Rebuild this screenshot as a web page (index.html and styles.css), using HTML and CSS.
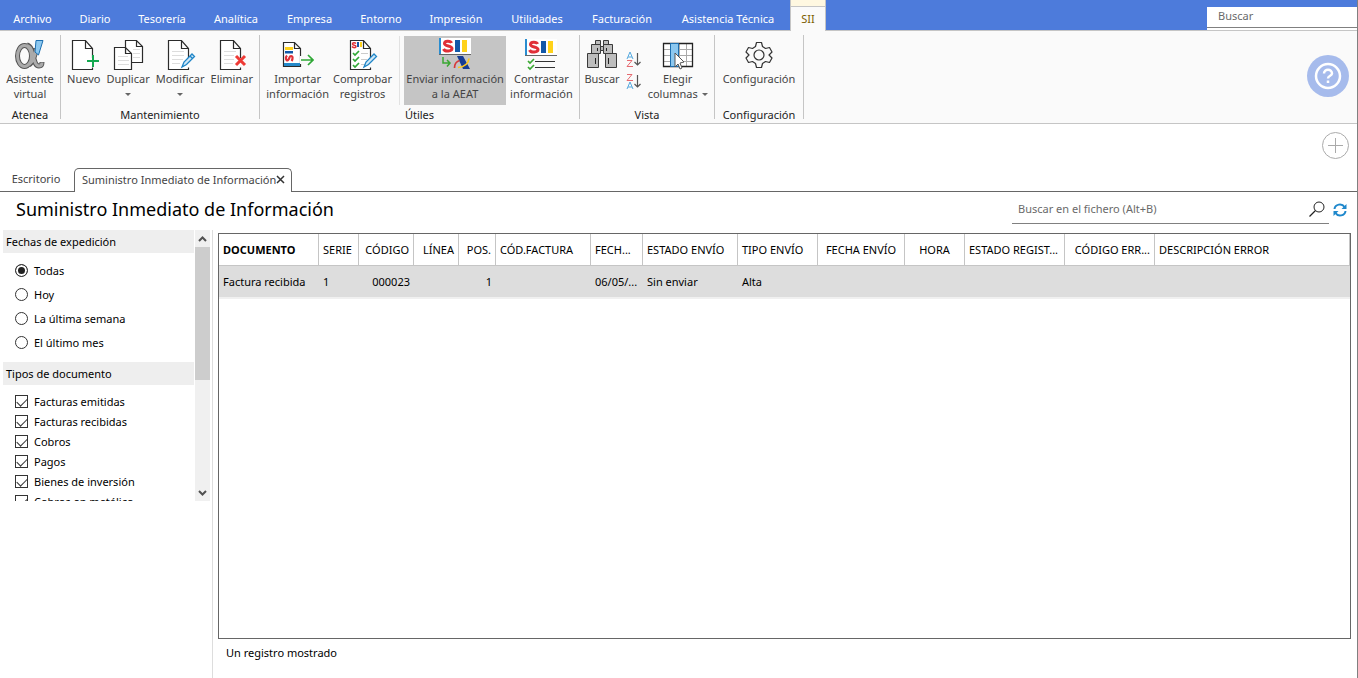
FILE: index.html
```html
<!DOCTYPE html>
<html lang="es">
<head>
<meta charset="utf-8">
<title>Suministro Inmediato de Información</title>
<link rel="stylesheet" href="styles.css">
</head>
<body>
<svg class="defs" aria-hidden="true">
  <symbol id="sii" viewBox="0 0 32 17">
    <path fill="#fff" d="M0 0h32v17H0z"/>
    <path fill="#2a8dd0" d="M0 0h2v17H0z"/>
    <path fill="#1258a8" d="M16 2h5v12h-5z"/>
    <path fill="#ffd21a" d="M23 2h5v12h-5z"/>
    <path fill="none" stroke="#e03038" stroke-width="3" d="M12.500 5C11.500 2.500 5.500 2.500 5.500 5.500S13 7.500 13 10.500s-7 3.500-8.500.5"/>
    <path stroke="#666" d="M0 16.500h32"/>
  </symbol>
  <symbol id="page" viewBox="0 0 24 32">
    <path fill="#fff" d="M1.500 1.500h13l7 8v21h-20z"/>
    <path fill="none" stroke="#2b2b2b" stroke-width="1.200" d="M21.500 19V9.500l-7-8h-13v29h20v-2M14.500 1.500v8h7"/>
  </symbol>
</svg>
<div class="app">
  <nav class="menu" aria-label="Menú principal">
    <button>Archivo</button>
    <button>Diario</button>
    <button>Tesorería</button>
    <button>Analítica</button>
    <button>Empresa</button>
    <button>Entorno</button>
    <button>Impresión</button>
    <button>Utilidades</button>
    <button>Facturación</button>
    <button>Asistencia Técnica</button>
    <button class="current">SII</button>
    <div class="menu-search"><input type="text" placeholder="Buscar" aria-label="Buscar"></div>
  </nav>

  <div class="ribbon">
    <section class="group atenea">
      <div class="tools">
        <button class="tool">
          <svg width="32" height="32" viewBox="0 0 32 32"><g fill="none" stroke="#555" stroke-width="5"><ellipse cx="10.500" cy="17" rx="7" ry="10.500"/><path d="M13 6c8 2 5 21 12 21 2 0 3-1 3-4M22 9c0 6-3 14-7 17"/></g><g fill="none" stroke="#aaa" stroke-width="3"><ellipse cx="10.500" cy="17" rx="7" ry="10.500"/><path d="M13 6.500c8 2 5 20.500 12 20.500 2 0 3-1 3-3.500M22 9.500c0 6-3 13-7 16"/></g><path fill="#8cc8f0" stroke="#1d6fb0" d="M22 1.500h7L24.500 16 21 13z"/></svg>
          <span>Asistente<br>virtual</span>
        </button>
      </div>
      <h2>Atenea</h2>
    </section>

    <section class="group mant">
      <div class="tools">
        <button class="tool">
          <svg width="32" height="32" viewBox="0 0 32 32"><use href="#page" x="3" width="24" height="32"/><path stroke="#14a850" stroke-width="2" d="M25 16v12M19 22h12"/></svg>
          <span>Nuevo</span>
        </button>
        <button class="tool">
          <svg width="32" height="32" viewBox="0 0 32 32"><g fill="#fff" stroke="#2b2b2b" stroke-width="1.200"><path d="M13.500 1.500h11l6 6v16h-17zM24.500 1.500v6h6"/><path d="M2.500 8.500h11l6 6v16h-17zM13.500 8.500v6h6"/></g><path stroke="#ddd" d="M6 17.500h10M6 21.500h11M6 25.500h11M21 10.500h7M21 14.500h7M21 18.500h7"/></svg>
          <span>Duplicar</span><i class="arrow"></i>
        </button>
        <button class="tool">
          <svg width="32" height="32" viewBox="0 0 32 32"><use href="#page" x="3" width="24" height="32"/><path stroke="#ddd" d="M8 12.500h12M8 16.500h12M8 20.500h11M8 24.500h8"/><path fill="#cfe8f8" stroke="#1f85c7" stroke-width="1.300" d="m18 28 2-5 8-8 2.500 2.500-8 8zm8-11 2.500 2.500"/></svg>
          <span>Modificar</span><i class="arrow"></i>
        </button>
        <button class="tool">
          <svg width="32" height="32" viewBox="0 0 32 32"><use href="#page" x="3" width="24" height="32"/><path stroke="#ddd" d="M8 12.500h12M8 16.500h10M8 20.500h10M8 24.500h9"/><path stroke="#ee3a35" stroke-width="3" d="m20 17 9 9m0-9-9 9"/></svg>
          <span>Eliminar</span>
        </button>
      </div>
      <h2>Mantenimiento</h2>
    </section>

    <section class="group utiles">
      <div class="tools">
        <button class="tool">
          <svg width="32" height="32" viewBox="0 0 32 32"><path fill="#fff" stroke="#2b2b2b" stroke-width="1.200" d="M1.500 3.500h11l6 6v18h-17zM12.500 3.500v6h6"/><path fill="#2589c9" d="M2 24h16v3H2z"/><path fill="#ffd21a" d="M3 8h8v3H3z"/><path fill="#1258a8" d="M3 12h8v2.500H3z"/><path fill="none" stroke="#e03038" stroke-width="2.200" d="M5 16.500c-2 2-1 6 1 4.500s1-4 3-4 2 3 .5 5"/><path fill="#fafafa" d="M18 17h4v8h-4z"/><path fill="none" stroke="#2fa836" stroke-width="1.700" d="M19 21h12m-5-5 5 5-5 5"/></svg>
          <span>Importar<br>información</span>
        </button>
        <button class="tool">
          <svg width="32" height="32" viewBox="0 0 32 32"><use href="#page" x="2" width="24" height="32"/><path fill="none" stroke="#e03038" stroke-width="1.500" d="M9 4.500c-1-1-3.500-1-3.500.5S9 6 9 7.500 6 9 5 7.500"/><path fill="#1258a8" d="M10 3h2v5h-2z"/><path fill="#ffd21a" d="M13 3h2v5h-2z"/><path fill="none" stroke="#2fa836" stroke-width="1.700" d="m6 14 2 2 4-4m-6 8 2 2 4-4m-6 8 2 2 4-4"/><path stroke="#ccc" d="M14 14.500h7M14 20.500h6M14 25.500h4"/><path fill="#cfe8f8" stroke="#1f85c7" stroke-width="1.300" d="m17 28 2-5 8-8 2.500 2.500-8 8z"/></svg>
          <span>Comprobar<br>registros</span>
        </button>
        <button class="tool active">
          <svg width="32" height="32" viewBox="0 0 32 32"><use href="#sii" width="32" height="17"/><path fill="none" stroke="#3aa832" stroke-width="1.500" d="M4 19v6h7m-3-3 3 3-3 3.500"/><path fill="#163c94" d="M18 18h6l7 13h-7z"/><path fill="none" stroke="#d83a3a" stroke-width="1.700" d="M15.500 30q0-6 5-7.500"/><path fill="none" stroke="#ffc61a" stroke-width="1.700" d="M19 29.500q10-1 11-9"/></svg>
          <span>Enviar información<br>a la AEAT</span>
        </button>
        <button class="tool">
          <svg width="32" height="32" viewBox="0 0 32 32"><use href="#sii" width="32" height="17"/><path stroke="#333" stroke-width="1.200" d="M10 22.500h20M10 28.500h20"/><path fill="none" stroke="#3aa832" stroke-width="1.700" d="m3 22 2 2 4-4m-6 8 2 2 4-4"/></svg>
          <span>Contrastar<br>información</span>
        </button>
      </div>
      <h2>Útiles</h2>
    </section>

    <section class="group vista">
      <div class="tools">
        <button class="tool">
          <svg width="32" height="32" viewBox="0 0 32 32"><g fill="#bdbdbd" stroke="#3a3a3a"><path d="M9.500 1.500h5v4h-5zM17.500 1.500h5v4h-5zM5.500 5.500h9v9h-9zM17.500 5.500h9v9h-9z"/><path d="M14.500 7.500h3v4h-3zM1.500 14.500h11v14h-11zM19.500 14.500h11v14h-11z"/></g><path stroke="#222" d="M9.500 19v6M11.500 9v3M20.500 9v3M22.500 19v6"/></svg>
          <span>Buscar</span>
        </button>
        <div class="sorts">
          <button aria-label="Orden ascendente"><svg width="16" height="17" viewBox="0 0 16 17"><g fill="none"><path stroke="#55a9df" d="m1 8 3-7 3 7M2 6h4"/><path stroke="#e66a70" d="M1 9.500h5l-5 6h6"/><path stroke="#555" stroke-width="1.200" d="M11.500 2v12m-3-3 3 3 3-3"/></g></svg></button>
          <button aria-label="Orden descendente"><svg width="16" height="17" viewBox="0 0 16 17"><g fill="none"><path stroke="#55a9df" d="m1 16 3-7 3 7M2 14h4"/><path stroke="#e66a70" d="M1 1.500h5l-5 6h6"/><path stroke="#555" stroke-width="1.200" d="M11.500 2v12m-3-3 3 3 3-3"/></g></svg></button>
        </div>
        <button class="tool">
          <svg width="32" height="32" viewBox="0 0 32 32"><path fill="#fff" d="M1 4h30v24H1z"/><path fill="none" stroke="#aaa" d="M1 10.500h30M1 16.500h30M1 22.500h30M17.500 4v24M24.500 4v24"/><path fill="none" stroke="#222" stroke-width="1.300" d="M1.500 4.500h29v23h-29z"/><path fill="#8cc8f0" stroke="#1d6fb0" d="M8.500 4.500h8v23h-8z"/><path fill="#fff" stroke="#555" d="m13 14 9 9-4 1 2 5-2 1-2-5-3 3z"/></svg>
          <span>Elegir<br>columnas <i class="arrow inline"></i></span>
        </button>
      </div>
      <h2>Vista</h2>
    </section>

    <section class="group config">
      <div class="tools">
        <button class="tool">
          <svg width="32" height="32" viewBox="0 0 32 32"><g fill="none" stroke="#333" stroke-width="1.200" stroke-linejoin="round"><circle cx="16" cy="16" r="5"/><path d="M13.500 3.500h5l1 4 3 2 4-1 2.500 4.500-3 3 3 3-2.500 4.500-4-1-3 2-1 4h-5l-1-4-3-2-4 1L3 19l3-3-3-3 2.500-4.500 4 1 3-2z"/></g></svg>
          <span>Configuración</span>
        </button>
      </div>
      <h2>Configuración</h2>
    </section>

    <button class="help" aria-label="Ayuda">
      <svg width="42" height="42" viewBox="0 0 42 42"><circle cx="21" cy="21" r="21" fill="#a6bbec"/><g fill="none" stroke="#fff" stroke-width="2.500"><circle cx="21" cy="21" r="12"/><path d="M17 18.500c0-5 8-5 8 0 0 2.500-4 2-4 5m0 2v2.500"/></g></svg>
    </button>
  </div>

  <div class="subbar">
    <button class="add" aria-label="Añadir">
      <svg width="27" height="27" viewBox="0 0 27 27"><g fill="none" stroke="#aaa"><circle cx="13.500" cy="13.500" r="13"/><path d="M13.500 6v15M6 13.500h15"/></g></svg>
    </button>
  </div>

  <div class="tabs">
    <button class="tab">Escritorio</button>
    <div class="tab selected"><span>Suministro Inmediato de Información</span>
      <button aria-label="Cerrar"><svg width="9" height="9" viewBox="0 0 9 9"><path stroke="#333" stroke-width="1.500" d="m1 1 7 7m0-7L1 8"/></svg></button>
    </div>
  </div>

  <header class="heading">
    <h1>Suministro Inmediato de Información</h1>
    <div class="file-search">
      <input type="text" placeholder="Buscar en el fichero (Alt+B)" aria-label="Buscar en el fichero">
      <svg width="16" height="16" viewBox="0 0 16 16"><circle cx="10" cy="6" r="5" fill="none" stroke="#222"/><path stroke="#222" stroke-width="1.200" d="m6.500 9.500-6 6"/></svg>
    </div>
    <button class="refresh" aria-label="Actualizar"><svg width="14" height="14" viewBox="0 0 14 14"><path fill="none" stroke="#1f88cc" stroke-width="2" d="M1.500 6C2 1 9 0 11.500 4M12.500 8C12 13 5 14 2.500 10"/><path fill="#1f88cc" d="M13.500 1v5h-5zM.5 13V8h5z"/></svg></button>
  </header>

  <main class="content">
    <aside class="side">
      <div class="filters">
        <div class="filter-list">
          <fieldset class="dates">
            <legend>Fechas de expedición</legend>
            <label><input type="radio" name="fecha" checked>Todas</label>
            <label><input type="radio" name="fecha">Hoy</label>
            <label><input type="radio" name="fecha">La última semana</label>
            <label><input type="radio" name="fecha">El último mes</label>
          </fieldset>
          <fieldset class="types">
            <legend>Tipos de documento</legend>
            <label><input type="checkbox" checked>Facturas emitidas</label>
            <label><input type="checkbox" checked>Facturas recibidas</label>
            <label><input type="checkbox" checked>Cobros</label>
            <label><input type="checkbox" checked>Pagos</label>
            <label><input type="checkbox" checked>Bienes de inversión</label>
            <label><input type="checkbox" checked>Cobros en metálico</label>
          </fieldset>
        </div>
        <div class="scroll">
          <svg width="9" height="6" viewBox="0 0 9 6"><path fill="none" stroke="#505050" stroke-width="2" d="m1 5 3.500-3.500L8 5"/></svg>
          <div class="thumb"></div>
          <svg width="9" height="6" viewBox="0 0 9 6"><path fill="none" stroke="#505050" stroke-width="2" d="m1 1 3.500 3.500L8 1"/></svg>
        </div>
      </div>
    </aside>
    <div class="records">
      <div class="grid">
        <table>
          <colgroup><col class="w100"><col class="w40"><col class="w55"><col class="w45"><col class="w37"><col class="w95"><col class="w52"><col class="w95"><col class="w80"><col class="w87"><col class="w60"><col class="w100"><col class="w90"><col></colgroup>
          <thead><tr><th class="sorted">DOCUMENTO</th><th>SERIE</th><th class="num">CÓDIGO</th><th class="num">LÍNEA</th><th class="num">POS.</th><th>CÓD.FACTURA</th><th>FECH...</th><th>ESTADO ENVÍO</th><th>TIPO ENVÍO</th><th class="mid">FECHA ENVÍO</th><th class="mid">HORA</th><th>ESTADO REGIST...</th><th class="num">CÓDIGO ERR...</th><th>DESCRIPCIÓN ERROR</th></tr></thead>
          <tbody><tr><td>Factura recibida</td><td>1</td><td class="num">000023</td><td></td><td class="num">1</td><td></td><td>06/05/...</td><td>Sin enviar</td><td>Alta</td><td></td><td></td><td></td><td></td><td></td></tr></tbody>
        </table>
      </div>
      <p class="status">Un registro mostrado</p>
    </div>
  </main>
</div>
</body>
</html>
```

FILE: styles.css
```css
* { box-sizing: border-box; }
body { margin: 0; font: 11px/15px "Noto Sans", "Open Sans", sans-serif; color: #000; background: #fff; }
button { font: inherit; color: inherit; border: 0; padding: 0; background: none; }
input { font: inherit; }
svg { display: block; }
h1, h2, p { margin: 0; font-weight: 400; }
.defs { position: absolute; width: 0; height: 0; }
.app { display: flex; flex-direction: column; min-height: 100vh; border-right: 1px solid #808080; }

.menu { display: grid; grid-template-columns: 65px 60px 74px 74px 73px 70px 80px 82px 88px 124px 36px 1fr; height: 31px; background: #4d7bdb; border-bottom: 1px solid #c5c5c5; color: #fff; }
.menu > button { padding-top: 5px; white-space: nowrap; }
.menu > .current { height: 31px; border: 1px solid #c5c5c5; border-width: 0 1px; background: linear-gradient(#fff8e1 6px, #c5c5c5 6px, #c5c5c5 7px, #fafafa 7px); color: #7a5c00; }
.menu-search { justify-self: end; width: 150px; margin-top: 7px; height: 23px; background: #fff; }
.menu-search input { width: 100%; height: 21px; border: 0; border-bottom: 1px solid #808080; padding: 0 11px 3px; background: none; }
::placeholder { color: #6a6a6a; opacity: 1; }

.ribbon { display: flex; height: 93px; background: #fafafa; border-bottom: 1px solid #c5c5c5; color: #444; }
.group { display: flex; flex-direction: column; margin: 4px 0; border-right: 1px solid #c5c5c5; }
.tools { display: flex; justify-content: center; margin-top: 1px; }
.group h2 { font-size: 11px; line-height: 15px; margin-top: 2px; text-align: center; color: #222; }
.tool { display: flex; flex-direction: column; align-items: center; padding: 3px 0 0; height: 69px; white-space: nowrap; }
.tool span { line-height: 15px; }
.arrow { width: 0; border: 3px solid transparent; border-top-color: #666; border-bottom: 0; margin-top: 7px; }
.arrow.inline { display: inline-block; margin: 0 0 2px 1px; }
.atenea { width: 61px; }
.mant { width: 199px; }
.mant .tools { gap: 6px; }
.utiles { width: 320px; }
.utiles .tools { gap: 4px; }
.active { background: #c5c5c5; width: 102px; padding-top: 2px; margin-left: 8px; box-shadow: -4px 0 #fafafa, -5px 0 #e2e2e2; }
.active span { margin-top: 1px; }
.vista { width: 135px; }
.vista .tools { gap: 6px; }
.vista .tools { padding-right: 2px; }
.sorts { display: flex; flex-direction: column; gap: 5px; padding-top: 15px; }
.config { width: 89px; }
.help { margin: 24px 8px auto auto; }

.subbar { display: flex; justify-content: flex-end; padding: 8px 8px 0; height: 44px; }
.add { height: 27px; }
.tabs { display: flex; height: 24px; border-bottom: 1px solid #666; color: #444; }
.tab { width: 74px; padding: 0 2px 3px 0; white-space: nowrap; }
.tab.selected { display: flex; align-items: center; justify-content: space-between; width: 218px; height: 24px; padding: 0 8px 3px 7px; border: 1px solid #666; border-bottom: 0; border-radius: 5px 5px 0 0; background: #fff; }

.heading { display: flex; align-items: flex-start; height: 38px; padding-left: 16px; }
.heading h1 { font-size: 18px; line-height: 34px; }
.file-search { display: flex; align-items: center; width: 317px; height: 32px; margin-left: auto; padding: 2px 4px 0 6px; border-bottom: 1px solid #808080; }
.file-search input { flex: 1; border: 0; padding: 0; }
.refresh { margin: 11px 10px 0 4px; }

.content { display: flex; flex: 1; }
.side { width: 213px; padding-left: 3px; border-right: 1px solid #ddd; }
.filters { display: flex; max-height: 271px; overflow: hidden; }
.filter-list { flex: 1; }
fieldset { border: 0; margin: 0; padding: 0; min-width: 0; }
legend { display: block; width: 191px; height: 23px; padding: 0 3px; line-height: 23px; background: #eee; margin-bottom: 5px; }
.types { margin-top: 8px; }
.types legend { margin-bottom: 6px; }
label { display: flex; align-items: center; gap: 6px; height: 24px; padding-left: 12px; }
.types label { height: 20px; }
label input { appearance: none; width: 13px; height: 13px; margin: 0; border: 1px solid #333; background: #fff; }
input[type="radio"] { border-radius: 50%; }
input[type="radio"]:checked { background: #222; box-shadow: inset 0 0 0 2px #fff; }
input[type="checkbox"] { display: grid; justify-items: center; align-items: start; }
input[type="checkbox"]:checked::before { content: ""; width: 9px; height: 5px; margin-top: 2px; border: solid #333; border-width: 0 0 1px 1px; transform: rotate(-45deg); }
.scroll { display: flex; flex-direction: column; align-items: center; width: 15px; margin: 0 2px 0 1px; padding: 6px 0 5px; background: #f0f0f0; }
.thumb { width: 15px; height: 133px; margin: 5px 0 auto; background: #cdcdcd; }

.records { display: flex; flex-direction: column; flex: 1; min-width: 0; padding: 3px 6px 0 5px; }
.grid { flex: 1; border: 1px solid #666; }
table { width: 100%; table-layout: fixed; border-collapse: separate; border-spacing: 0; }
th, td { padding: 0 4px; text-align: left; font-weight: 400; white-space: nowrap; }
th { height: 32px; border-right: 1px solid #c5c5c5; border-bottom: 1px solid #c5c5c5; }
td { height: 33px; background: #ddd; border-bottom: 2px solid #f0f0f0; }
th.sorted { font-weight: 700; }
.num { text-align: right; }
.mid { text-align: center; }
.w37 { width: 37px; } .w40 { width: 40px; } .w45 { width: 45px; } .w52 { width: 52px; } .w55 { width: 55px; }
.w60 { width: 60px; } .w80 { width: 80px; } .w87 { width: 87px; } .w90 { width: 90px; } .w95 { width: 95px; } .w100 { width: 100px; }
.status { height: 39px; padding: 6px 8px; }
```
